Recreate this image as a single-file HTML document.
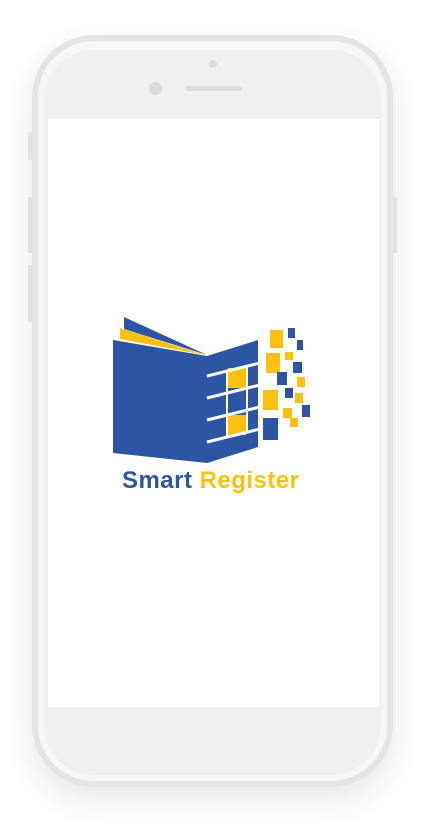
<!DOCTYPE html>
<html><head><meta charset="utf-8"><style>
html,body{margin:0;padding:0;background:#fff;}
body{width:424px;height:825px;position:relative;overflow:hidden;font-family:"Liberation Sans",sans-serif;}
.abs{position:absolute;}
</style></head><body>
<div class="abs" style="left:32px;top:35px;width:361px;height:752px;border-radius:62px;background:#e4e4e6;box-shadow:0 12px 30px rgba(0,0,0,0.10);"></div>
<div class="abs" style="left:38px;top:41px;width:349px;height:740px;border-radius:56px;background:#f6f6f6;"></div>
<div class="abs" style="left:44px;top:50px;width:337px;height:725px;border-radius:50px;background:#f0f0f0;"></div>
<div class="abs" style="left:28px;top:132px;width:4px;height:28px;background:#e2e2e2;border-radius:2px 0 0 2px;"></div>
<div class="abs" style="left:28px;top:197px;width:4px;height:56px;background:#e2e2e2;border-radius:2px 0 0 2px;"></div>
<div class="abs" style="left:28px;top:265px;width:4px;height:57px;background:#e2e2e2;border-radius:2px 0 0 2px;"></div>
<div class="abs" style="left:393px;top:197px;width:4px;height:56px;background:#e2e2e2;border-radius:0 2px 2px 0;"></div>
<div class="abs" style="left:209px;top:60px;width:8px;height:8px;border-radius:50%;background:#dcdcdc;"></div>
<div class="abs" style="left:149px;top:82px;width:13px;height:13px;border-radius:50%;background:#dcdcdc;"></div>
<div class="abs" style="left:185px;top:86px;width:57px;height:5px;border-radius:3px;background:#dcdcdc;"></div>
<div class="abs" style="left:48px;top:119px;width:331px;height:588px;background:#fff;"></div>
<svg class="abs" style="left:0;top:0" width="424" height="825" viewBox="0 0 424 825">
<polygon points="124,317 207,355 124,329" fill="#2d55a4"/>
<polygon points="120,328 205,355 120,339" fill="#fcc10f"/>
<polygon points="113,340 207,356 207,463 113,453" fill="#2d55a4"/>
<polygon points="207,356 258,340 258,447 207,463" fill="#2d55a4"/>
<rect x="228" y="368" width="18" height="20" fill="#fcc10f"/>
<rect x="228" y="415" width="18" height="20" fill="#fcc10f"/>
<g stroke="#fff" stroke-width="3">
<line x1="207" y1="376" x2="264" y2="362"/>
<line x1="207" y1="398" x2="264" y2="384"/>
<line x1="207" y1="420" x2="264" y2="406"/>
<line x1="207" y1="442" x2="264" y2="428"/>
<line x1="227" y1="371" x2="227" y2="437" stroke-width="2"/>
<line x1="247" y1="366" x2="247" y2="432" stroke-width="2"/>
</g>
<g fill="#fcc10f">
<rect x="270" y="330" width="13" height="18"/><rect x="266" y="353" width="14" height="20"/><rect x="285" y="352" width="8" height="8"/>
<rect x="297" y="377" width="8" height="10"/><rect x="263" y="390" width="15" height="20"/><rect x="295" y="393" width="8" height="10"/>
<rect x="283" y="408" width="9" height="10"/><rect x="290" y="418" width="8" height="9"/>
</g>
<g fill="#2d55a4">
<rect x="288" y="328" width="7" height="10"/><rect x="297" y="340" width="6" height="10"/><rect x="293" y="362" width="9" height="11"/>
<rect x="277" y="372" width="10" height="13"/><rect x="285" y="388" width="8" height="10"/><rect x="302" y="405" width="8" height="12"/>
<rect x="263" y="418" width="15" height="22"/>
</g>
<text x="122" y="488" font-family="Liberation Sans, sans-serif" font-weight="bold" font-size="24" fill="#2d55a4" textLength="177" lengthAdjust="spacing">Smart <tspan fill="#fcc10f">Register</tspan></text>
</svg>
</body></html>
